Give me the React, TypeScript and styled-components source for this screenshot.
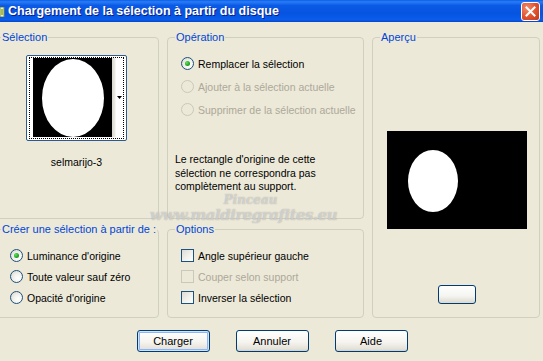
import styled, { createGlobalStyle } from "styled-components";

const GlobalStyle = createGlobalStyle`
  html, body {
    margin: 0;
    padding: 0;
    background: #ece9d8;
  }
  body {
    font-family: "Liberation Sans", Arial, sans-serif;
    font-size: 10.5px;
    color: #000;
    overflow: hidden;
  }
`;

export default function App() {
  return (
    <Window>
      <GlobalStyle />
      <TitleBar>
        <TitleIcon viewBox="0 0 5 10" width={5} height={10}>
          <rect x="0" y="0" width="4" height="10" fill="#f4f0c8" stroke="#7a8a3a" strokeWidth="1" />
          <rect x="1" y="2" width="2" height="6" fill="#9cc24a" />
        </TitleIcon>
        <Title>Chargement de la sélection à partir du disque</Title>
        <CloseButton>
          <svg width="11" height="11" viewBox="0 0 11 11">
            <path d="M1.5 1.5 L9.5 9.5 M9.5 1.5 L1.5 9.5" stroke="#fff" strokeWidth="2" strokeLinecap="square" />
          </svg>
        </CloseButton>
      </TitleBar>

      <Body>
        <Groups>
          <Group>
            <Legend>Sélection</Legend>
            <SelectionContent>
              <Thumb>
                <svg width="79" height="79" viewBox="0 0 79 79">
                  <rect width="79" height="79" fill="#000" />
                  <ellipse cx="40" cy="40" rx="31" ry="39" fill="#fff" />
                </svg>
                <ArrowCell>
                  <svg width="5" height="3" viewBox="0 0 5 3">
                    <path d="M0 0 H5 L2.5 3 Z" fill="#000" />
                  </svg>
                </ArrowCell>
              </Thumb>
              <ThumbName>selmarijo-3</ThumbName>
            </SelectionContent>
          </Group>

          <Group>
            <Legend>Opération</Legend>
            <OptionList $top={14} $left={13} $row={23}>
              <OptionRow>
                <Radio $checked />
                Remplacer la sélection
              </OptionRow>
              <OptionRow $disabled>
                <Radio $disabled />
                Ajouter à la sélection actuelle
              </OptionRow>
              <OptionRow $disabled>
                <Radio $disabled />
                Supprimer de la sélection actuelle
              </OptionRow>
            </OptionList>
            <Note>
              Le rectangle d'origine de cette
              <br />
              sélection ne correspondra pas
              <br />
              complètement au support.
            </Note>
          </Group>

          <PreviewGroup>
            <Legend>Aperçu</Legend>
            <PreviewContent>
              <svg width="140" height="98" viewBox="0 0 140 98">
                <rect width="140" height="98" fill="#000" />
                <ellipse cx="46" cy="50" rx="25" ry="31" fill="#fff" />
              </svg>
              <SmallButton />
            </PreviewContent>
          </PreviewGroup>

          <Group>
            <Legend>Créer une sélection à partir de :</Legend>
            <OptionList $top={15} $left={16} $row={21}>
              <OptionRow>
                <Radio $checked />
                Luminance d'origine
              </OptionRow>
              <OptionRow>
                <Radio />
                Toute valeur sauf zéro
              </OptionRow>
              <OptionRow>
                <Radio />
                Opacité d'origine
              </OptionRow>
            </OptionList>
          </Group>

          <Group>
            <Legend>Options</Legend>
            <OptionList $top={15} $left={13} $row={21}>
              <OptionRow>
                <Check />
                Angle supérieur gauche
              </OptionRow>
              <OptionRow $disabled>
                <Check $disabled />
                Couper selon support
              </OptionRow>
              <OptionRow>
                <Check />
                Inverser la sélection
              </OptionRow>
            </OptionList>
          </Group>
        </Groups>

        <Watermark>
          <span>Pinceau</span>
          <span>www.maldiregrafites.eu</span>
        </Watermark>

        <ButtonRow>
          <PushButton $default>Charger</PushButton>
          <PushButton>Annuler</PushButton>
          <PushButton>Aide</PushButton>
        </ButtonRow>
      </Body>
    </Window>
  );
}

const Window = styled.div`
  width: 543px;
  height: 361px;
  display: flex;
  flex-direction: column;
  background: #ece9d8;
  overflow: hidden;
`;

const TitleBar = styled.div`
  height: 22px;
  flex: none;
  display: flex;
  align-items: center;
  background: linear-gradient(
    to bottom,
    #0a5ee8 0%,
    #2a7cf5 8%,
    #0b5ae6 25%,
    #0654e0 60%,
    #0a5cec 90%,
    #0346c8 100%
  );
`;

const TitleIcon = styled.svg`
  flex: none;
  margin-top: 1px;
`;

const Title = styled.div`
  flex: 1;
  margin-left: 3px;
  font-family: "Liberation Sans", Arial, sans-serif;
  font-weight: bold;
  font-size: 12.5px;
  color: #fff;
  text-shadow: 1px 1px 0 #0a1e8c;
  white-space: nowrap;
`;

const CloseButton = styled.div`
  width: 17px;
  height: 17px;
  margin-right: 3px;
  display: flex;
  align-items: center;
  justify-content: center;
  border: 1px solid #fff;
  border-radius: 3px;
  background: radial-gradient(circle at 30% 30%, #f08a6a 0%, #e0502e 55%, #c4371a 100%);
`;

const Body = styled.div`
  position: relative;
  flex: 1;
  display: flex;
  flex-direction: column;
  padding-top: 15px;
`;

const Groups = styled.div`
  margin-left: -7px;
  display: grid;
  grid-template-columns: 166px 197px 168px;
  grid-template-rows: 182px 89px;
  column-gap: 8px;
  row-gap: 10px;
`;

const Group = styled.div`
  position: relative;
  border: 1px solid #d0d0bf;
  border-radius: 4px;
  box-sizing: border-box;
`;

const PreviewGroup = styled(Group)`
  grid-column: 3;
  grid-row: 1 / span 2;
`;

const Legend = styled.div`
  position: absolute;
  top: -8px;
  left: 7px;
  padding: 0 1px;
  line-height: 14px;
  font-size: 11px;
  background: #ece9d8;
  color: #0046d5;
  white-space: nowrap;
`;

const SelectionContent = styled.div`
  display: flex;
  flex-direction: column;
  align-items: center;
  padding-top: 17px;
  padding-left: 1px;
`;

const Thumb = styled.div`
  position: relative;
  width: 101px;
  height: 86px;
  box-sizing: border-box;
  display: flex;
  padding: 2px 0 0 6px;
  border: 1px solid #2b5a8e;
  border-radius: 2px;
  background: #fff;

  &::after {
    content: "";
    position: absolute;
    left: 2px;
    top: 1px;
    right: 2px;
    bottom: 1px;
    border: 1px dotted #000;
  }
`;

const ArrowCell = styled.div`
  flex: 1;
  height: 79px;
  display: flex;
  align-items: center;
  justify-content: flex-end;
  padding-right: 4px;
  background: linear-gradient(to right, #d8d8d0 0, #ecece6 3px, #fff 4px);
`;

const ThumbName = styled.div`
  margin-top: 15px;
  line-height: 13px;
`;

const OptionList = styled.div<{ $top: number; $left: number; $row: number }>`
  display: flex;
  flex-direction: column;
  padding-top: ${(p) => p.$top}px;
  padding-left: ${(p) => p.$left}px;

  & > div {
    height: ${(p) => p.$row}px;
  }
`;

const OptionRow = styled.div<{ $disabled?: boolean }>`
  display: flex;
  align-items: center;
  gap: 4px;
  white-space: nowrap;
  color: ${(p) => (p.$disabled ? "#aca899" : "#000")};
`;

const Radio = styled.span<{ $checked?: boolean; $disabled?: boolean }>`
  position: relative;
  flex: none;
  width: 13px;
  height: 13px;
  box-sizing: border-box;
  border-radius: 50%;
  border: 1px solid ${(p) => (p.$disabled ? "#cac8bb" : "#1c5180")};
  background: ${(p) =>
    p.$disabled
      ? "#ece9d8"
      : "radial-gradient(circle at 65% 65%, #ffffff 0%, #f4f3ee 40%, #d6d3c8 100%)"};

  &::after {
    content: "";
    display: ${(p) => (p.$checked ? "block" : "none")};
    position: absolute;
    left: 3px;
    top: 3px;
    width: 5px;
    height: 5px;
    border-radius: 50%;
    background: radial-gradient(circle at 35% 35%, #5fe35f 0%, #21a121 60%, #1a7d1a 100%);
  }
`;

const Check = styled.span<{ $disabled?: boolean }>`
  flex: none;
  width: 13px;
  height: 13px;
  box-sizing: border-box;
  border: 1px solid ${(p) => (p.$disabled ? "#cac8bb" : "#1c5180")};
  background: ${(p) =>
    p.$disabled
      ? "#ece9d8"
      : "linear-gradient(135deg, #dcdbd5 0%, #f0efea 50%, #ffffff 100%)"};
`;

const Note = styled.div`
  margin-top: 32px;
  padding-left: 7px;
  line-height: 13.5px;
`;

const PreviewContent = styled.div`
  display: flex;
  flex-direction: column;
  align-items: center;
  padding-top: 93px;
  padding-left: 1px;
`;

const SmallButton = styled.div`
  margin-top: 56px;
  width: 38px;
  height: 19px;
  box-sizing: border-box;
  border: 1px solid #003c74;
  border-radius: 3px;
  background: linear-gradient(to bottom, #ffffff 0%, #f4f4f0 60%, #dcd8cc 100%);
`;

const Watermark = styled.div`
  position: absolute;
  left: 150px;
  top: 172px;
  display: flex;
  flex-direction: column;
  align-items: center;
  pointer-events: none;
  font-family: "DejaVu Serif", serif;
  font-weight: bold;
  font-style: italic;
  color: rgba(255, 255, 255, 0.5);
  text-shadow: 0 0 1px rgba(100, 100, 100, 0.6);

  span:first-child {
    font-size: 12px;
    line-height: 12px;
    margin-left: 14px;
  }
  span:last-child {
    font-size: 15px;
    line-height: 18px;
    letter-spacing: -0.5px;
  }
`;

const ButtonRow = styled.div`
  display: flex;
  justify-content: center;
  gap: 26px;
  margin-top: 12px;
  padding-left: 1px;
`;

const PushButton = styled.div<{ $default?: boolean }>`
  width: 73px;
  height: 22px;
  box-sizing: border-box;
  display: flex;
  align-items: center;
  justify-content: center;
  font-size: 11px;
  border: 1px solid #003c74;
  border-radius: 3px;
  background: linear-gradient(to bottom, #ffffff 0%, #f5f4ef 55%, #e4e1d8 90%, #d6d0c5 100%);
  box-shadow: ${(p) =>
    p.$default ? "inset 0 0 0 1px #cde3ff, inset 0 0 0 2px #8fb4f0" : "none"};
  color: #000;
`;
